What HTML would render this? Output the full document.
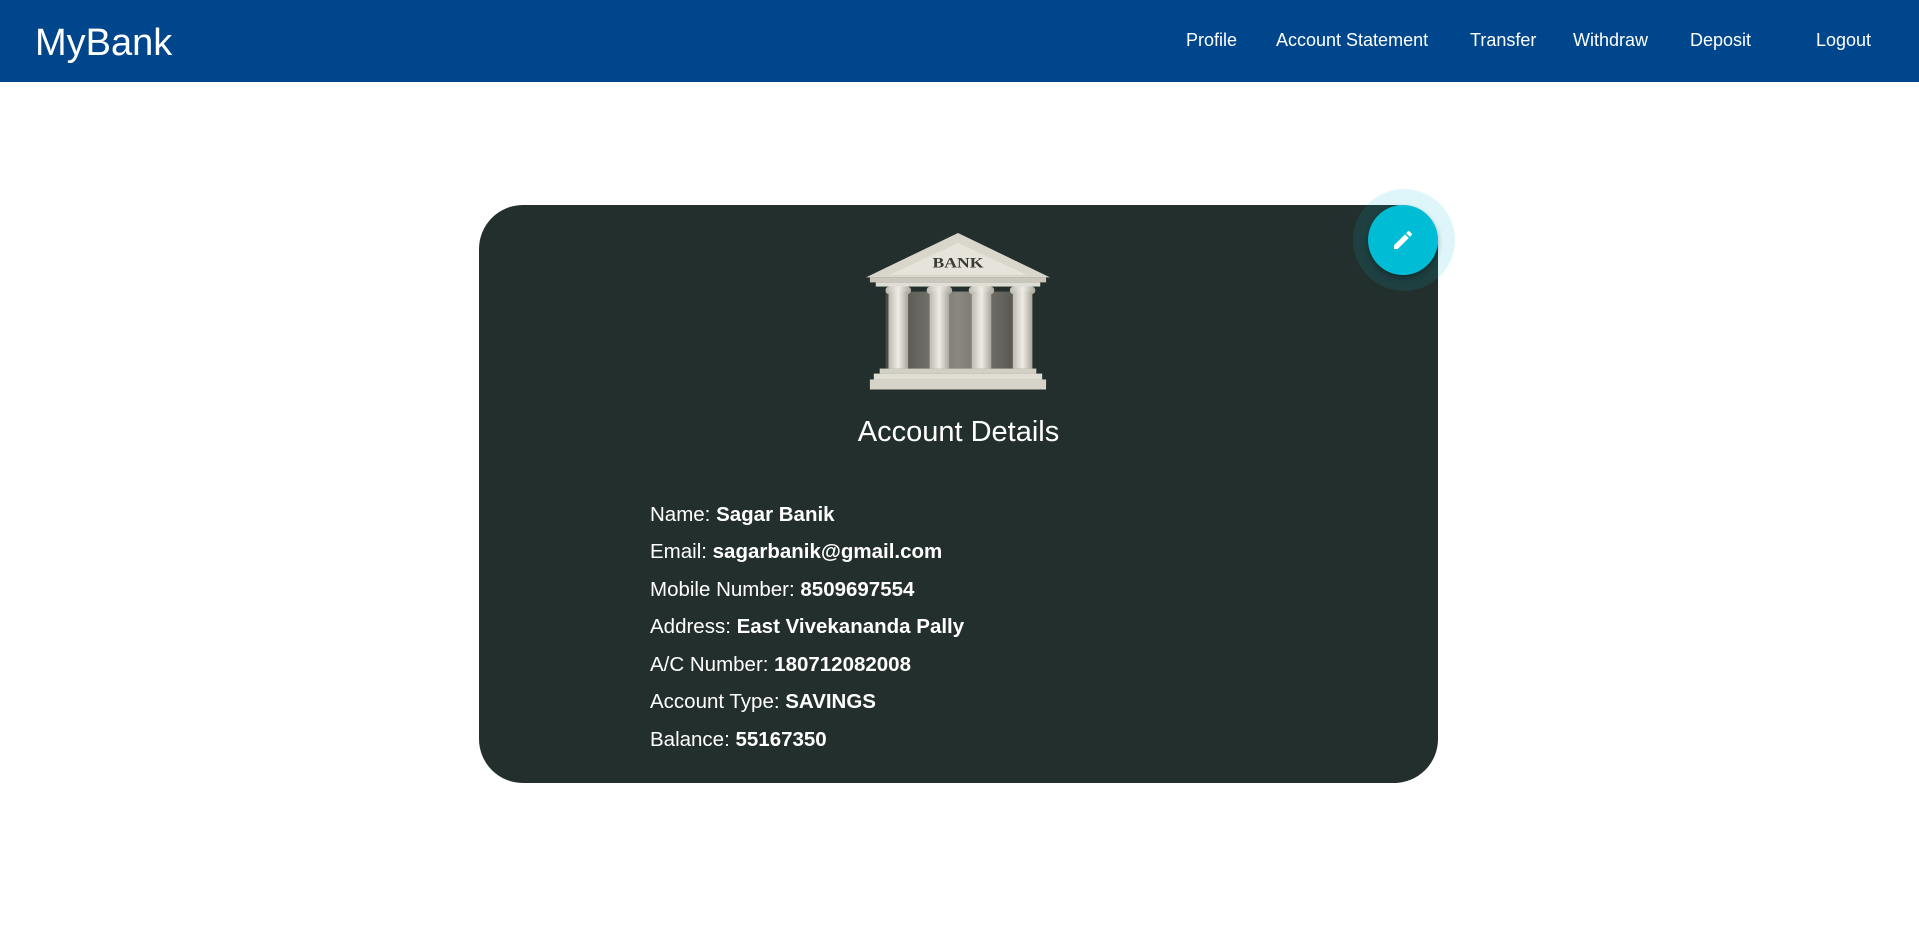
<!DOCTYPE html>
<html><head><style>
*{margin:0;padding:0;box-sizing:border-box}
body{width:1919px;height:939px;background:#fff;font-family:"Liberation Sans",sans-serif;position:relative;overflow:hidden}
nav{position:absolute;left:0;top:0;width:1919px;height:82px;background:#00468c;color:#fff}
.brand{position:absolute;left:35px;top:22px;font-size:38px}
.l{position:absolute;top:30px;font-size:18px;white-space:nowrap}
.card{position:absolute;left:479px;top:205px;width:959px;height:578px;background:#232f2c;border-radius:44px;color:#fff}
.h{position:absolute;left:0;width:100%;top:211px;text-align:center;font-size:29px}
.row{position:absolute;left:171px;font-size:20.5px;white-space:nowrap}
.row b{font-weight:bold}
.halo{position:absolute;left:1353px;top:189px;width:102px;height:102px;border-radius:50%;background:rgba(0,188,212,0.13)}
.btn{position:absolute;left:1368px;top:205px;width:70px;height:70px;border-radius:50%;background:#00bcd4;box-shadow:0 3px 6px rgba(0,0,0,.3)}
</style></head><body>
<nav><div class="brand">MyBank</div>
<span class="l" style="left:1186px">Profile</span>
<span class="l" style="left:1276px">Account Statement</span>
<span class="l" style="left:1470px">Transfer</span>
<span class="l" style="left:1573px">Withdraw</span>
<span class="l" style="left:1690px">Deposit</span>
<span class="l" style="left:1816px">Logout</span>
</nav>
<div class="card">
<svg style="position:absolute;left:387px;top:28px" width="184" height="159" viewBox="0 0 188 190" preserveAspectRatio="none">
<defs><linearGradient id="g" x1="0" x2="1"><stop offset="0" stop-color="#4a4a44"/><stop offset=".5" stop-color="#8a8880"/><stop offset="1" stop-color="#4a4a44"/></linearGradient>
<linearGradient id="c" x1="0" x2="1"><stop offset="0" stop-color="#bdbab0"/><stop offset=".5" stop-color="#eeece4"/><stop offset="1" stop-color="#a9a69c"/></linearGradient></defs>
<polygon points="94,0 0,53 188,53" fill="#d9d6cc"/>
<polygon points="94,12 24,50 164,50" fill="#e6e3da"/>
<text x="94" y="41" text-anchor="middle" font-family="Liberation Serif" font-weight="bold" font-size="18" fill="#3a3a36">BANK</text>
<rect x="4" y="53" width="180" height="6" fill="#c9c6bc"/>
<rect x="10" y="59" width="168" height="5" fill="#e0ddd4"/>
<rect x="20" y="70" width="148" height="92" fill="url(#g)"/>
<g fill="url(#c)">
<rect x="20" y="64" width="26" height="9" rx="4"/><rect x="23" y="70" width="20" height="92"/>
<rect x="62" y="64" width="26" height="9" rx="4"/><rect x="65" y="70" width="20" height="92"/>
<rect x="105" y="64" width="26" height="9" rx="4"/><rect x="108" y="70" width="20" height="92"/>
<rect x="147" y="64" width="26" height="9" rx="4"/><rect x="150" y="70" width="20" height="92"/>
</g>
<rect x="14" y="162" width="160" height="6" fill="#d2cfc5"/>
<rect x="8" y="168" width="172" height="7" fill="#e0ddd4"/>
<rect x="4" y="175" width="180" height="12" fill="#d6d3c9"/>
</svg>
<div class="h">Account Details</div>
<div class="row" style="top:298px">Name: <b>Sagar Banik</b></div>
<div class="row" style="top:335px">Email: <b>sagarbanik@gmail.com</b></div>
<div class="row" style="top:373px">Mobile Number: <b>8509697554</b></div>
<div class="row" style="top:410px">Address: <b>East Vivekananda Pally</b></div>
<div class="row" style="top:448px">A/C Number: <b>180712082008</b></div>
<div class="row" style="top:485px">Account Type: <b>SAVINGS</b></div>
<div class="row" style="top:523px">Balance: <b>55167350</b></div>
</div>
<div class="halo"></div>
<div class="btn"><svg style="position:absolute;left:23px;top:23px" width="24" height="24" viewBox="0 0 24 24"><path fill="#fff" d="M3 17.25V21h3.75L17.81 9.94l-3.75-3.75L3 17.25zM20.71 7.04a1 1 0 0 0 0-1.41l-2.340-2.34a1 1 0 0 0-1.41 0l-1.83 1.830 3.75 3.75 1.83-1.83z"/></svg></div>
</body></html>
